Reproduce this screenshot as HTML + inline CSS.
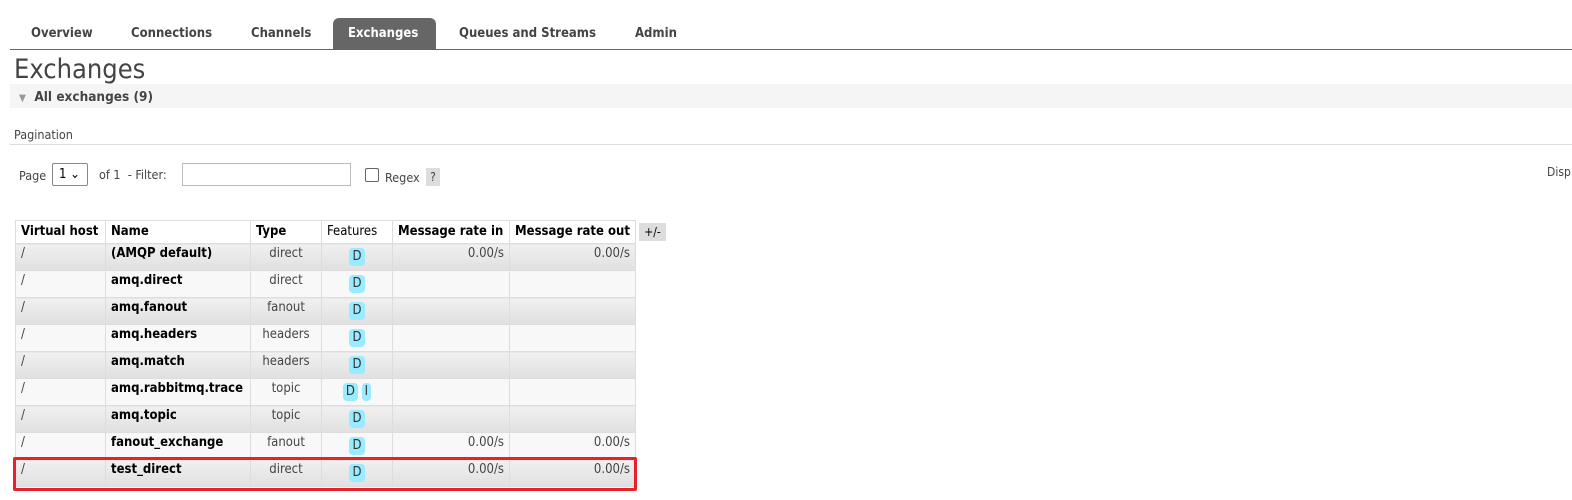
<!DOCTYPE html>
<html><head><style>
body{margin:0;width:1572px;height:500px;overflow:hidden;background:#fff;font-family:"DejaVu Sans Condensed","Liberation Sans",sans-serif;font-size:12px;color:#444;position:relative}
.abs{position:absolute}
.tab{position:absolute;top:18px;height:31px;line-height:32px;font-weight:bold;font-size:13px;color:#444}
.sel{background:#666;color:#fff;border-radius:6px 6px 0 0;padding:0 15px}
table{position:absolute;left:15px;top:220px;border-collapse:collapse}
td,th{border:1px solid #ddd;height:26px;padding:0 5px;font-size:13px;white-space:nowrap;vertical-align:top;line-height:20px}
th{text-align:left;color:#000;height:22px;vertical-align:middle;line-height:22px;background:#fff}
tr.o td{background:linear-gradient(#f0f0f0,#e0e0e0)}
tr.e td{background:#f8f8f8}
td.n{font-weight:bold;color:#000}
td.c{text-align:center}
td.r{text-align:right}
.b{display:inline-block;background:#99ebff;border-radius:4px;padding:0 3px;line-height:18px;margin-top:4px;color:#333;font-size:13px}
</style></head><body>
<div class="tab" style="left:31px">Overview</div>
<div class="tab" style="left:131px">Connections</div>
<div class="tab" style="left:251px">Channels</div>
<div class="tab sel" style="left:333px;width:73px">Exchanges</div>
<div class="tab" style="left:459px">Queues and Streams</div>
<div class="tab" style="left:635px">Admin</div>
<div class="abs" style="left:10px;top:49px;width:1562px;height:1px;background:#666"></div>
<div class="abs" style="left:14px;top:54px;font-size:27px;color:#444">Exchanges</div>
<div class="abs" style="left:10px;top:84px;width:1562px;height:24px;background:#f5f5f5"></div>
<div class="abs" style="left:19px;top:89px;font-size:13.5px;font-weight:bold;color:#444"><span style="color:#999;font-size:10px">▼</span>&nbsp; All exchanges (9)</div>
<div class="abs" style="left:14px;top:127px;font-size:12.5px">Pagination</div>
<div class="abs" style="left:10px;top:144px;width:1562px;height:1px;background:#ddd"></div>
<div class="abs" style="left:19px;top:168px;font-size:12.5px">Page</div>
<div class="abs" style="left:52px;top:163px;width:36px;height:23px;border:1px solid #888;border-radius:2px;line-height:21px;padding-left:6px;box-sizing:border-box;color:#000;font-size:13px">1 ⌄</div>
<div class="abs" style="left:99px;top:167px;font-size:12.5px">of 1 &nbsp;- Filter:</div>
<div class="abs" style="left:182px;top:163px;width:169px;height:23px;border:1px solid #bbb;box-sizing:border-box"></div>
<div class="abs" style="left:365px;top:168px;width:12px;height:12px;border:1px solid #666;border-radius:2px"></div>
<div class="abs" style="left:385px;top:170px;font-size:12.5px">Regex</div>
<div class="abs" style="left:426px;top:168px;width:14px;height:18px;background:#ddd;text-align:center;line-height:18px">?</div>
<div class="abs" style="left:1547px;top:165px">Disp</div>
<div class="abs" style="left:639px;top:223px;width:27px;height:18px;background:#ddd;text-align:center;line-height:18px;color:#000">+/-</div>
<table>
<tr><th style="width:79px">Virtual host</th><th style="width:134px">Name</th><th style="width:60px">Type</th><th style="width:60px;font-weight:normal">Features</th><th style="width:106px">Message rate in</th><th style="width:115px">Message rate out</th></tr>
<tr class="o"><td>/</td><td class="n">(AMQP default)</td><td class="c">direct</td><td class="c"><span class="b">D</span></td><td class="r">0.00/s</td><td class="r">0.00/s</td></tr>
<tr class="e"><td>/</td><td class="n">amq.direct</td><td class="c">direct</td><td class="c"><span class="b">D</span></td><td></td><td></td></tr>
<tr class="o"><td>/</td><td class="n">amq.fanout</td><td class="c">fanout</td><td class="c"><span class="b">D</span></td><td></td><td></td></tr>
<tr class="e"><td>/</td><td class="n">amq.headers</td><td class="c">headers</td><td class="c"><span class="b">D</span></td><td></td><td></td></tr>
<tr class="o"><td>/</td><td class="n">amq.match</td><td class="c">headers</td><td class="c"><span class="b">D</span></td><td></td><td></td></tr>
<tr class="e"><td>/</td><td class="n">amq.rabbitmq.trace</td><td class="c">topic</td><td class="c"><span class="b">D</span> <span class="b">I</span></td><td></td><td></td></tr>
<tr class="o"><td>/</td><td class="n">amq.topic</td><td class="c">topic</td><td class="c"><span class="b">D</span></td><td></td><td></td></tr>
<tr class="e"><td>/</td><td class="n">fanout_exchange</td><td class="c">fanout</td><td class="c"><span class="b">D</span></td><td class="r">0.00/s</td><td class="r">0.00/s</td></tr>
<tr class="o"><td>/</td><td class="n">test_direct</td><td class="c">direct</td><td class="c"><span class="b">D</span></td><td class="r">0.00/s</td><td class="r">0.00/s</td></tr>
</table>
<div class="abs" style="left:13px;top:457px;width:618px;height:28px;border:3px solid #e8202a;border-radius:2px"></div>
</body></html>
